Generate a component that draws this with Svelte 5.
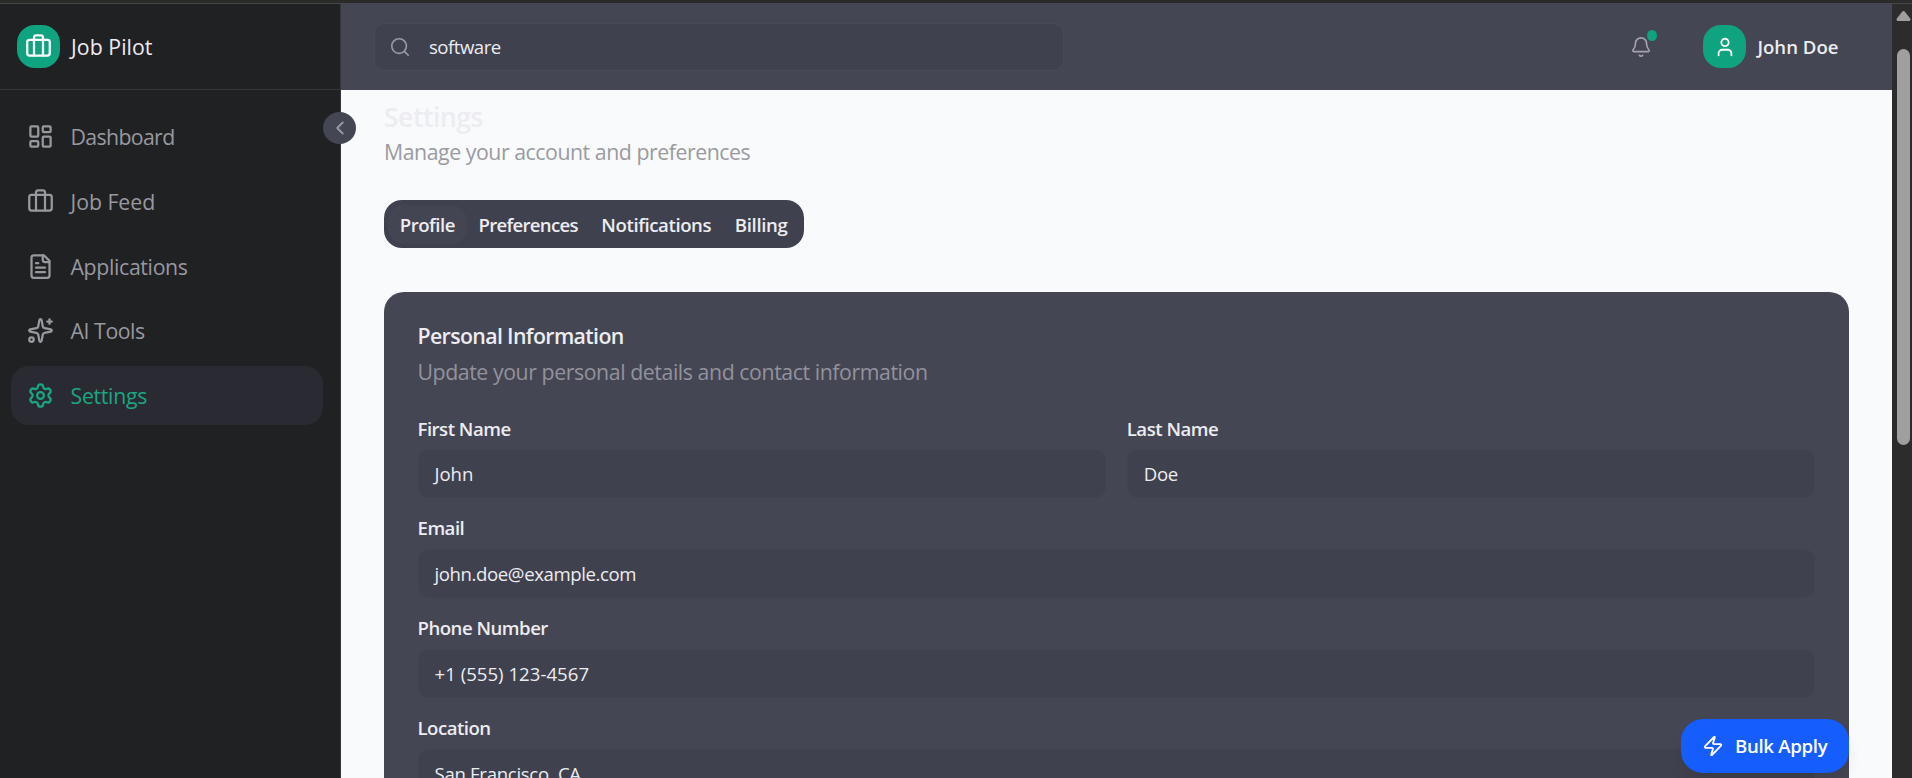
<script>
  const icons = {
    dashboard:
      '<rect width="7" height="9" x="3" y="3" rx="1"/><rect width="7" height="5" x="14" y="3" rx="1"/><rect width="7" height="9" x="14" y="12" rx="1"/><rect width="7" height="5" x="3" y="16" rx="1"/>',
    briefcase:
      '<path d="M16 20V4a2 2 0 0 0-2-2h-4a2 2 0 0 0-2 2v16"/><rect width="20" height="14" x="2" y="6" rx="2"/>',
    file: '<path d="M15 2H6a2 2 0 0 0-2 2v16a2 2 0 0 0 2 2h12a2 2 0 0 0 2-2V7Z"/><path d="M14 2v4a2 2 0 0 0 2 2h4"/><path d="M10 9H8"/><path d="M16 13H8"/><path d="M16 17H8"/>',
    sparkles:
      '<path d="M11.017 2.814a1 1 0 0 1 1.966 0l1.051 5.558a2 2 0 0 0 1.594 1.594l5.558 1.051a1 1 0 0 1 0 1.966l-5.558 1.051a2 2 0 0 0-1.594 1.594l-1.051 5.558a1 1 0 0 1-1.966 0l-1.051-5.558a2 2 0 0 0-1.594-1.594l-5.558-1.051a1 1 0 0 1 0-1.966l5.558-1.051a2 2 0 0 0 1.594-1.594z"/><path d="M20 2v4"/><path d="M22 4h-4"/><circle cx="4" cy="20" r="2"/>',
    settings:
      '<path d="M9.671 4.136a2.34 2.34 0 0 1 4.659 0 2.34 2.34 0 0 0 3.319 1.915 2.34 2.34 0 0 1 2.33 4.033 2.34 2.34 0 0 0 0 3.831 2.34 2.34 0 0 1-2.33 4.033 2.34 2.34 0 0 0-3.319 1.915 2.34 2.34 0 0 1-4.659 0 2.34 2.34 0 0 0-3.32-1.915 2.34 2.34 0 0 1-2.33-4.033 2.34 2.34 0 0 0 0-3.831A2.34 2.34 0 0 1 6.35 6.051a2.34 2.34 0 0 0 3.319-1.915"/><circle cx="12" cy="12" r="3"/>',
    chevron: '<path d="m15 18-6-6 6-6"/>',
    search: '<circle cx="11" cy="11" r="8"/><path d="m21 21-4.3-4.3"/>',
    bell: '<path d="M10.268 21a2 2 0 0 0 3.464 0"/><path d="M3.262 15.326A1 1 0 0 0 4 17h16a1 1 0 0 0 .74-1.673C19.41 13.956 18 12.499 18 8A6 6 0 0 0 6 8c0 4.499-1.411 5.956-2.738 7.326"/>',
    user: '<path d="M19 21v-2a4 4 0 0 0-4-4H9a4 4 0 0 0-4 4v2"/><circle cx="12" cy="7" r="4"/>',
    zap: '<path d="M4 14a1 1 0 0 1-.78-1.63l9.9-10.2a.5.5 0 0 1 .86.46l-1.92 6.02A1 1 0 0 0 13 10h7a1 1 0 0 1 .78 1.63l-9.9 10.2a.5.5 0 0 1-.86-.46l1.92-6.02A1 1 0 0 0 11 14z"/>',
  };

  // `track` is the letter-spacing of a text, in pixels
  const nav = [
    { label: 'Dashboard', icon: 'dashboard', track: -0.65 },
    { label: 'Job Feed', icon: 'briefcase', track: -0.05 },
    { label: 'Applications', icon: 'file', track: -0.35 },
    { label: 'AI Tools', icon: 'sparkles', track: -0.45 },
    { label: 'Settings', icon: 'settings', track: -0.3 },
  ];
  const tabs = [
    { label: 'Profile', track: -0.5 },
    { label: 'Preferences', track: -0.72 },
    { label: 'Notifications', track: -0.41 },
    { label: 'Billing', track: -0.33 },
  ];
  const fields = [
    { label: 'First Name', value: 'John', track: -0.05 },
    { label: 'Last Name', value: 'Doe', track: -0.3 },
    { label: 'Email', value: 'john.doe@example.com', wide: true, track: -0.4 },
    { label: 'Phone Number', value: '+1 (555) 123-4567', wide: true, track: 0.02 },
    { label: 'Location', value: 'San Francisco, CA', wide: true, track: -0.3 },
  ];
  let page = $state('Settings');
  let tab = $state('Profile');
</script>

{#snippet icon(name, size, stroke = 2)}
  <svg width={size} height={size} viewBox="0 0 24 24" fill="none" stroke="currentColor" stroke-width={stroke} stroke-linecap="round" stroke-linejoin="round" aria-hidden="true">{@html icons[name]}</svg>
{/snippet}

<div class="window">
  <aside>
    <div class="brand">
      <span class="badge">{@render icon('briefcase', 27)}</span>
      <span class="name">Job Pilot</span>
    </div>
    <nav>
      {#each nav as item}
        <button class="link" class:active={page === item.label} onclick={() => (page = item.label)}>
          {@render icon(item.icon, 27)}<span style:letter-spacing="{item.track}px">{item.label}</span>
        </button>
      {/each}
    </nav>
    <button class="collapse" aria-label="Collapse">{@render icon('chevron', 22)}</button>
  </aside>

  <div class="main">
    <header>
      <div class="search">{@render icon('search', 22, 1.8)}<span>software</span></div>
      <div class="account">
        <span class="bell">{@render icon('bell', 22, 1.8)}<i></i></span>
        <span class="badge">{@render icon('user', 22)}</span>
        <span class="user">John Doe</span>
      </div>
    </header>

    <section class="content">
      <h1>Settings</h1>
      <p class="lead">Manage your account and preferences</p>
      <div class="tabs">
        {#each tabs as t}
          <button class:active={tab === t.label} style:letter-spacing="{t.track}px" onclick={() => (tab = t.label)}>{t.label}</button>
        {/each}
      </div>

      <div class="card">
        <h2>Personal Information</h2>
        <p class="sub">Update your personal details and contact information</p>
        <div class="fields">
          {#each fields as f}
            <div class="field" class:wide={f.wide}>
              <span class="label">{f.label}</span>
              <div class="input" style:letter-spacing="{f.track}px">{f.value}</div>
            </div>
          {/each}
        </div>
      </div>
    </section>
  </div>

  <div class="scroll">
    <svg width="16" height="12" viewBox="0 0 16 12"><path d="M8.5 2.5 L14 9.5 H3 Z" fill="#9f9f9f" stroke="#9f9f9f" stroke-width="3" stroke-linejoin="round" /></svg>
    <div class="thumb"></div>
  </div>

  <button class="bulk">{@render icon('zap', 22)}<span>Bulk Apply</span></button>
</div>

<style>
  :global(body) {
    margin: 0;
    overflow: hidden;
  }
  .window {
    position: relative;
    box-sizing: border-box;
    width: 1912px;
    height: 778px;
    overflow: hidden;
    display: flex;
    border-top: 3px solid #2b2c2a;
    background: #f9fafc;
    font-family: 'Open Sans', 'Noto Sans', sans-serif;
    font-size: 21.3px;
    letter-spacing: -0.4px;
    color: #ececf1;
  }
  .window * {
    box-sizing: border-box;
  }
  button {
    border: 0;
    padding: 0;
    background: none;
    color: inherit;
    font: inherit;
    letter-spacing: inherit;
    cursor: pointer;
  }
  svg {
    display: block;
    flex: none;
  }
  h1,
  h2,
  p {
    margin: 0;
    white-space: nowrap;
  }
  aside {
    position: relative;
    z-index: 2;
    flex: none;
    width: 341px;
    background: #202123;
    border-top: 1px solid #444547;
    border-right: 1px solid #36373b;
  }
  .brand {
    height: 86px;
    padding-left: 17px;
    display: flex;
    align-items: center;
    gap: 11px;
    border-bottom: 1px solid #36373a;
  }
  .name {
    letter-spacing: 0.05px;
  }
  .badge {
    width: 43px;
    height: 43px;
    flex: none;
    display: grid;
    place-items: center;
    border-radius: 18px;
    background: #10a37f;
    color: #fff;
  }
  nav {
    padding: 17.4px 17px 0 11px;
    display: flex;
    flex-direction: column;
    gap: 6px;
    color: #98989f;
  }
  .link {
    height: 58.7px;
    padding-left: 16px;
    display: flex;
    align-items: center;
    gap: 16.5px;
    border-radius: 18px;
  }
  .link.active {
    background: #2a2b32;
    color: #1aa682;
  }
  .collapse {
    position: absolute;
    left: 323px;
    top: 108px;
    width: 33px;
    height: 32px;
    display: grid;
    place-items: center;
    border-radius: 50%;
    background: #454653;
    color: #9a9aa4;
  }
  .main {
    flex: 1;
    min-width: 0;
  }
  header {
    height: 87px;
    padding: 0 53.5px 0 33px;
    display: flex;
    align-items: center;
    justify-content: space-between;
    background: #454653;
  }
  .search {
    width: 690px;
    height: 48px;
    padding-left: 14px;
    display: flex;
    align-items: center;
    gap: 18px;
    border: 1px solid #494a57;
    border-radius: 11px;
    background: #40414e;
    font-size: 18.6px;
    letter-spacing: -0.5px;
  }
  .search svg {
    color: #9a9aa4;
  }
  .account {
    display: flex;
    align-items: center;
  }
  .bell {
    position: relative;
    margin-right: 51px;
    color: #a3a3ad;
  }
  .bell i {
    position: absolute;
    right: -5px;
    top: -6px;
    width: 10px;
    height: 11px;
    border-radius: 50%;
    background: #10a37f;
  }
  .user {
    margin-left: 11px;
    font-size: 18.6px;
    font-weight: 600;
    letter-spacing: 0;
  }
  .content {
    padding: 8px 43px 0;
  }
  h1 {
    font-size: 26.6px;
    font-weight: 600;
    line-height: 38px;
    letter-spacing: -0.5px;
  }
  .lead {
    line-height: 32px;
    letter-spacing: -0.46px;
    color: #9a9a9f;
  }
  .tabs {
    width: 420px;
    height: 48px;
    margin-top: 32px;
    padding: 5px 4px 4px;
    display: flex;
    border-radius: 18px;
    background: #40414e;
    font-size: 18.6px;
    font-weight: 600;
  }
  .tabs button {
    padding: 0 11.8px 1px;
    border-radius: 16px;
    white-space: nowrap;
  }
  .tabs .active {
    background: #444552;
  }
  .card {
    height: 600px;
    margin-top: 44px;
    padding: 26px 34px 0 33.5px;
    border-radius: 20px;
    background: #454653;
  }
  h2 {
    font-size: 21.3px;
    font-weight: 600;
    line-height: 36px;
    letter-spacing: -0.63px;
  }
  .sub {
    line-height: 36px;
    letter-spacing: -0.43px;
    color: #92929c;
  }
  .fields {
    margin-top: 26px;
    display: grid;
    grid-template-columns: 1fr 1fr;
    column-gap: 21px;
    row-gap: 18px;
  }
  .wide {
    grid-column: span 2;
  }
  .label {
    display: block;
    height: 33px;
    line-height: 24px;
    font-size: 18.6px;
    font-weight: 600;
    letter-spacing: -0.5px;
  }
  .field:not(.wide) .label {
    line-height: 26px;
  }
  .input {
    height: 49px;
    line-height: 47px;
    padding-left: 16px;
    border: 1px solid #42434f;
    border-radius: 11px;
    background: #40414e;
    font-size: 18.6px;
  }
  .scroll {
    flex: none;
    width: 20px;
    border-top: 1px solid #444;
    background: #2c2c2c;
    padding: 6px 2px 0 5px;
  }
  .scroll svg {
    margin-left: -2px;
  }
  .thumb {
    width: 13px;
    height: 396px;
    margin-top: 27px;
    border-radius: 7px;
    background: #9f9f9f;
  }
  .bulk {
    position: absolute;
    right: 63px;
    bottom: 5px;
    width: 168px;
    height: 54px;
    padding: 0 0 1px 21px;
    display: flex;
    align-items: center;
    gap: 11px;
    border-radius: 22px;
    background: #155dfc;
    color: #fff;
    font-size: 18.6px;
    font-weight: 600;
    letter-spacing: -0.3px;
    box-shadow: 0 10px 16px -3px rgba(0, 0, 0, 0.1);
    white-space: nowrap;
  }
</style>
